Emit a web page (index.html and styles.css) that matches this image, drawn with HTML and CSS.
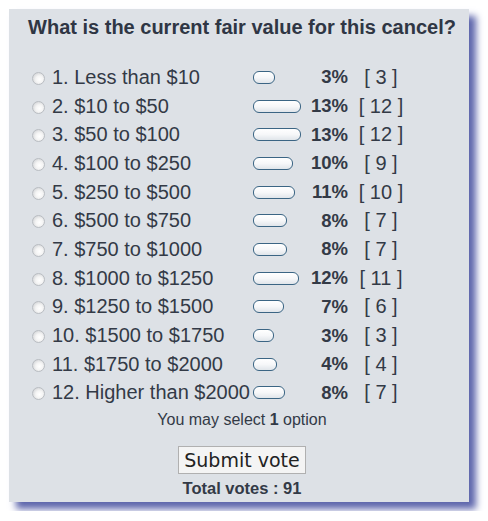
FILE: index.html
```html
<!DOCTYPE html>
<html>
<head>
<meta charset="utf-8">
<link rel="stylesheet" href="styles.css">
</head>
<body>
<div class="panel">
  <h1 class="title">What is the current fair value for this cancel?</h1>
  <div class="poll">
    <div class="row"><span class="radio"></span><span class="label">1. Less than $10</span><span class="barcell"><span class="bar" style="width:20px"></span></span><span class="pct">3%</span><span class="cnt">[ 3 ]</span></div>
    <div class="row"><span class="radio"></span><span class="label">2. $10 to $50</span><span class="barcell"><span class="bar" style="width:46px"></span></span><span class="pct">13%</span><span class="cnt">[ 12 ]</span></div>
    <div class="row"><span class="radio"></span><span class="label">3. $50 to $100</span><span class="barcell"><span class="bar" style="width:46px"></span></span><span class="pct">13%</span><span class="cnt">[ 12 ]</span></div>
    <div class="row"><span class="radio"></span><span class="label">4. $100 to $250</span><span class="barcell"><span class="bar" style="width:38px"></span></span><span class="pct">10%</span><span class="cnt">[ 9 ]</span></div>
    <div class="row"><span class="radio"></span><span class="label">5. $250 to $500</span><span class="barcell"><span class="bar" style="width:40px"></span></span><span class="pct">11%</span><span class="cnt">[ 10 ]</span></div>
    <div class="row"><span class="radio"></span><span class="label">6. $500 to $750</span><span class="barcell"><span class="bar" style="width:32px"></span></span><span class="pct">8%</span><span class="cnt">[ 7 ]</span></div>
    <div class="row"><span class="radio"></span><span class="label">7. $750 to $1000</span><span class="barcell"><span class="bar" style="width:32px"></span></span><span class="pct">8%</span><span class="cnt">[ 7 ]</span></div>
    <div class="row"><span class="radio"></span><span class="label">8. $1000 to $1250</span><span class="barcell"><span class="bar" style="width:44px"></span></span><span class="pct">12%</span><span class="cnt">[ 11 ]</span></div>
    <div class="row"><span class="radio"></span><span class="label">9. $1250 to $1500</span><span class="barcell"><span class="bar" style="width:29px"></span></span><span class="pct">7%</span><span class="cnt">[ 6 ]</span></div>
    <div class="row"><span class="radio"></span><span class="label">10. $1500 to $1750</span><span class="barcell"><span class="bar" style="width:19px"></span></span><span class="pct">3%</span><span class="cnt">[ 3 ]</span></div>
    <div class="row"><span class="radio"></span><span class="label">11. $1750 to $2000</span><span class="barcell"><span class="bar" style="width:22px"></span></span><span class="pct">4%</span><span class="cnt">[ 4 ]</span></div>
    <div class="row"><span class="radio"></span><span class="label">12. Higher than $2000</span><span class="barcell"><span class="bar" style="width:30px"></span></span><span class="pct">8%</span><span class="cnt">[ 7 ]</span></div>
  </div>
  <p class="note">You may select <b>1</b> option</p>
  <div class="actions"><button class="submit" type="button">Submit vote</button></div>
  <p class="total">Total votes : 91</p>
</div>
</body>
</html>
```
FILE: styles.css
```css
html, body { margin: 0; padding: 0; background: #ffffff; }
body { padding: 9px; font-family: "Liberation Sans", Arial, sans-serif; color: #333a46; }
.panel {
  width: 460px;
  height: 493px;
  box-sizing: border-box;
  background: #dde1e6;
  box-shadow: 7px 7px 7px #5e66ac;
  padding-top: 7px;
}
.title {
  margin: 0;
  font-size: 20px;
  font-weight: bold;
  text-align: center;
  padding-left: 6px;
  line-height: 22px;
  color: #2f3644;
}
.poll { margin-top: 25px; padding-left: 23px; }
.row {
  display: grid;
  grid-template-columns: 20px 201px 56px 39px 66px;
  align-items: center;
  height: 28.7px;
  font-size: 20px;
}
.radio {
  width: 13px;
  height: 13px;
  border-radius: 50%;
  box-sizing: border-box;
  border: 1px solid #b9bdc2;
  background: radial-gradient(circle at 58% 58%, #ffffff 0, #f4f4f4 40%, #c4c7cb 100%);
  position: relative;
  top: 1px;
}
.label { white-space: nowrap; }
.barcell { display: flex; align-items: center; }
.bar {
  display: block;
  height: 11px;
  border: 1.5px solid #3b6584;
  border-radius: 6px;
  background: linear-gradient(#ffffff, #f6f7f9 50%, #e0e5ea);
}
.pct { font-weight: bold; text-align: right; font-size: 18.5px; }
.cnt { text-align: center; }
.note {
  margin: 4px 0 0;
  font-size: 16px;
  text-align: center;
  padding-left: 6px;
}
.note b { font-weight: bold; }
.actions { text-align: center; margin-top: 17px; padding-left: 6px; }
.submit {
  font-family: "DejaVu Sans", Verdana, sans-serif;
  font-size: 19px;
  color: #222;
  background: #f4f4f4;
  border: 1px solid #b0b0b0;
  padding: 1px 5px;
  height: 28px;
  line-height: 22px;
}
.total {
  margin: 5px 0 0;
  font-size: 16.5px;
  font-weight: bold;
  text-align: center;
  padding-left: 6px;
}
```
